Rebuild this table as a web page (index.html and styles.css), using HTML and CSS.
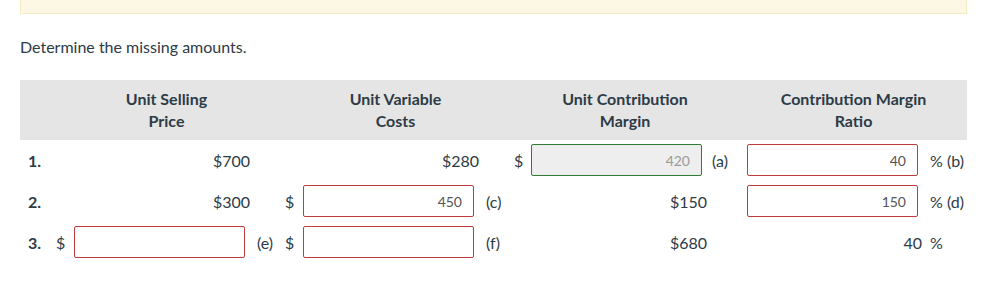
FILE: index.html
```html
<!DOCTYPE html>
<html lang="en">
  <head>
    <meta charset="UTF-8" />
    <meta name="viewport" content="width=device-width, initial-scale=1.0" />
    <title>Contribution Margin</title>
    <link rel="stylesheet" href="styles.css">
  </head>
  <body>
    <!-- Notice strip -->
    <div class="notice"></div>

    <p class="prompt">Determine the missing amounts.</p>

    <!-- Column headings -->
    <div class="grid head">
      <div></div>
      <div class="span3">Unit Selling<br />Price</div>
      <div class="span3">Unit Variable<br />Costs</div>
      <div class="span3">Unit Contribution<br />Margin</div>
      <div class="span3">Contribution Margin<br />Ratio</div>
    </div>

    <!-- Row 1 -->
    <div class="grid row">
      <div class="num">1.</div>
      <div class="value span2">$700</div>
      <div></div>
      <div class="value span2">$280</div>
      <div></div>
      <div class="cur">$</div>
      <input class="field ok" type="text" value="420" disabled />
      <div class="tag near">(a)</div>
      <div></div>
      <input class="field bad" type="text" value="40" />
      <div class="tag">% (b)</div>
    </div>

    <!-- Row 2 -->
    <div class="grid row">
      <div class="num">2.</div>
      <div class="value span2">$300</div>
      <div></div>
      <div class="cur">$</div>
      <input class="field bad" type="text" value="450" />
      <div class="tag">(c)</div>
      <div class="value span2">$150</div>
      <div></div>
      <div></div>
      <input class="field bad" type="text" value="150" />
      <div class="tag">% (d)</div>
    </div>

    <!-- Row 3 -->
    <div class="grid row">
      <div class="num">3.</div>
      <div class="cur">$</div>
      <input class="field bad" type="text" value="" />
      <div class="tag">(e)</div>
      <div class="cur">$</div>
      <input class="field bad" type="text" value="" />
      <div class="tag">(f)</div>
      <div class="value span2">$680</div>
      <div></div>
      <div class="value span2 pct">40</div>
      <div class="tag">%</div>
    </div>
  </body>
</html>
```

FILE: styles.css
```css
/* Base */
* {
  margin: 0;
  padding: 0;
  box-sizing: border-box;
}

body {
  font-family: Lato, "Liberation Sans", sans-serif;
  font-size: 16px;
  color: #2d3b45;
  background: #fff;
}

/* Notice strip at the top */
.notice {
  height: 14px;
  margin: 0 22px 0 20px;
  background: #fcf8e3;
  border: 1px solid #f5ecc4;
  border-top: none;
}

.prompt {
  margin: 23px 20px 23px 20px;
  line-height: 20px;
}

/* Shared column layout */
.grid {
  display: grid;
  grid-template-columns: 32px 22px 171px 36px 22px 171px 36px 21px 171px 38px 7px 171px 49px;
  margin: 0 22px 0 20px;
}

.span2 {
  grid-column: span 2;
}

.span3 {
  grid-column: span 3;
}

/* Heading band */
.head {
  background: #e5e5e5;
  padding: 8px 0;
  font-weight: bold;
  line-height: 22px;
  text-align: center;
}

/* Answer rows */
.row {
  height: 32px;
  margin-top: 9px;
  align-items: center;
}

.head + .row {
  margin-top: 4px;
}

.num {
  font-weight: bold;
  padding-left: 8px;
}

.cur {
  padding-left: 4px;
}

.value {
  text-align: right;
  margin-right: -5px;
}

.value.pct {
  margin-right: -4px;
}

.tag {
  padding-left: 12px;
  white-space: nowrap;
}

.tag.near {
  padding-left: 10px;
}

/* Input boxes */
.field {
  width: 171px;
  height: 32px;
  border: 1px solid #c03b3b;
  border-radius: 2px;
  padding: 0 11px;
  font-family: Lato, "Liberation Sans", sans-serif;
  font-size: 14px;
  color: #555;
  text-align: right;
  background: #fff;
  outline: none;
}

.field.ok {
  border-color: #2f7d32;
  background: #eeeeee;
  color: #9a9a9a;
}
```
